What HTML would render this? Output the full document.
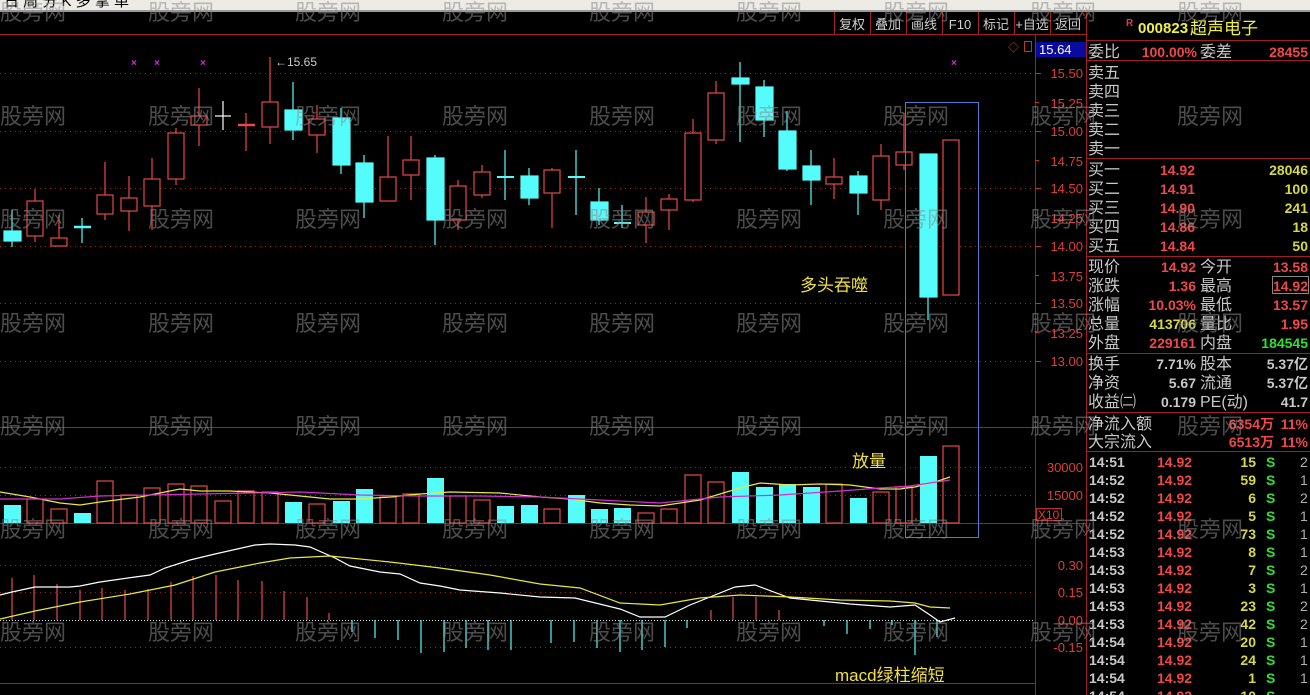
<!DOCTYPE html>
<html><head><meta charset="utf-8"><style>
html,body{margin:0;padding:0;background:#000;width:1310px;height:695px;overflow:hidden}
svg{display:block}
text{font-family:"Liberation Sans","Noto Sans CJK SC",sans-serif}
.cn{font-family:"Liberation Sans","WenQuanYi Zen Hei","Noto Sans CJK SC",sans-serif}
</style></head><body>
<svg width="1310" height="695" xmlns="http://www.w3.org/2000/svg">
<rect width="1310" height="695" fill="#000"/>
<rect x="0" y="0" width="1310" height="10" fill="#ecebe6"/>
<rect x="0" y="10" width="1310" height="2" fill="#9a9a9a"/>
<text x="4" y="6" font-size="15" fill="#000" class="cn">日 周 分 K 多 掌 单</text>
<g stroke="#a02020" stroke-width="1">
<line x1="0" y1="34.5" x2="1086" y2="34.5"/>
<line x1="834.5" y1="12" x2="834.5" y2="34"/><line x1="870.5" y1="12" x2="870.5" y2="34"/><line x1="906.5" y1="12" x2="906.5" y2="34"/><line x1="942.5" y1="12" x2="942.5" y2="34"/><line x1="978.5" y1="12" x2="978.5" y2="34"/><line x1="1014.5" y1="12" x2="1014.5" y2="34"/><line x1="1050.5" y1="12" x2="1050.5" y2="34"/>
<line x1="1086.5" y1="12" x2="1086.5" y2="695"/>
<line x1="1035.5" y1="34" x2="1035.5" y2="695"/>
<line x1="0" y1="427.5" x2="1086" y2="427.5"/>
<line x1="0" y1="523.5" x2="1086" y2="523.5"/>
<line x1="0" y1="683.5" x2="1035" y2="683.5"/>
</g>
<g font-size="13" fill="#d0d0d0" class="cn" text-anchor="middle">
<text x="852" y="29">复权</text><text x="888" y="29">叠加</text><text x="924" y="29">画线</text><text x="960" y="29">F10</text><text x="996" y="29">标记</text><text x="1032" y="29">+自选</text><text x="1068" y="29">返回</text>
</g>
<g stroke="#a02020" stroke-width="1" stroke-dasharray="1,4">
<line x1="0" y1="73.5" x2="1035" y2="73.5"/><line x1="0" y1="131.5" x2="1035" y2="131.5"/><line x1="0" y1="188.5" x2="1035" y2="188.5"/><line x1="0" y1="246.5" x2="1035" y2="246.5"/><line x1="0" y1="303.5" x2="1035" y2="303.5"/><line x1="0" y1="361.5" x2="1035" y2="361.5"/>
<line x1="0" y1="467.5" x2="1035" y2="467.5"/><line x1="0" y1="495.5" x2="1035" y2="495.5"/>
<line x1="0" y1="565.5" x2="1035" y2="565.5"/><line x1="0" y1="592.5" x2="1035" y2="592.5"/><line x1="0" y1="647.5" x2="1035" y2="647.5"/>
</g>
<line x1="0" y1="620.5" x2="1035" y2="620.5" stroke="#ddd" stroke-dasharray="1,2"/>
<g font-size="13" fill="#e03c3c" text-anchor="end">
<text x="1083" y="78">15.50</text><text x="1083" y="108">15.25</text><text x="1083" y="136">15.00</text><text x="1083" y="166">14.75</text><text x="1083" y="193">14.50</text><text x="1083" y="223">14.25</text><text x="1083" y="251">14.00</text><text x="1083" y="281">13.75</text><text x="1083" y="308">13.50</text><text x="1083" y="338">13.25</text><text x="1083" y="366">13.00</text>
<text x="1083" y="472">30000</text><text x="1083" y="500">15000</text>
<text x="1083" y="570">0.30</text><text x="1083" y="597">0.15</text><text x="1083" y="625">0.00</text><text x="1083" y="652">-0.15</text>
</g>
<g stroke="#c03030"><line x1="1035" y1="73.5" x2="1041" y2="73.5"/><line x1="1035" y1="131.5" x2="1041" y2="131.5"/><line x1="1035" y1="188.5" x2="1041" y2="188.5"/><line x1="1035" y1="246.5" x2="1041" y2="246.5"/><line x1="1035" y1="303.5" x2="1041" y2="303.5"/><line x1="1035" y1="361.5" x2="1041" y2="361.5"/><line x1="1035" y1="102.5" x2="1039" y2="102.5"/><line x1="1035" y1="160.5" x2="1039" y2="160.5"/><line x1="1035" y1="217.5" x2="1039" y2="217.5"/><line x1="1035" y1="275.5" x2="1039" y2="275.5"/><line x1="1035" y1="332.5" x2="1039" y2="332.5"/></g>
<rect x="1036.5" y="508.5" width="25" height="12" fill="none" stroke="#c03030"/>
<text x="1038" y="519" font-size="12" fill="#e03c3c">X10</text>
<rect x="1036" y="42" width="50" height="15" fill="#0a0aa0"/>
<text x="1039" y="54" font-size="13" fill="#fff">15.64</text>
<text x="1008" y="51" font-size="11" fill="#e03c3c">◇</text>
<rect x="1024.5" y="41.5" width="7" height="10" fill="none" stroke="#c03030"/>
<g font-size="10" fill="#e020e0" font-weight="bold"><text x="131" y="66">×</text><text x="154" y="66">×</text><text x="200" y="66">×</text><text x="951" y="66">×</text></g>
<text x="275" y="66" font-size="12" fill="#ccc">←15.65</text>
<g stroke="#e84848" stroke-width="1.2" fill="#000">
<line x1="35" y1="189" x2="35" y2="242"/><rect x="27" y="201" width="16" height="35"/>
<line x1="59" y1="215" x2="59" y2="246"/><rect x="51" y="238" width="16" height="8"/>
<line x1="105" y1="162" x2="105" y2="220"/><rect x="97" y="195" width="16" height="19"/>
<line x1="129" y1="176" x2="129" y2="231"/><rect x="121" y="198" width="16" height="13"/>
<line x1="152" y1="158" x2="152" y2="230"/><rect x="144" y="179" width="16" height="27"/>
<line x1="176" y1="128" x2="176" y2="185"/><rect x="168" y="133" width="16" height="46"/>
<line x1="199" y1="88" x2="199" y2="146"/><rect x="191" y="116" width="16" height="9"/>
<line x1="246" y1="113" x2="246" y2="151"/><line x1="238" y1="125" x2="255" y2="125" stroke-width="2.5"/>
<line x1="270" y1="57" x2="270" y2="144"/><rect x="262" y="102" width="16" height="25"/>
<line x1="317" y1="105" x2="317" y2="153"/><rect x="309" y="119" width="16" height="16"/>
<line x1="388" y1="136" x2="388" y2="200"/><rect x="380" y="177" width="16" height="24"/>
<line x1="411" y1="136" x2="411" y2="200"/><rect x="403" y="160" width="16" height="15"/>
<line x1="458" y1="180" x2="458" y2="230"/><rect x="450" y="186" width="16" height="34"/>
<line x1="482" y1="165" x2="482" y2="198"/><rect x="474" y="172" width="16" height="23"/>
<line x1="552" y1="168" x2="552" y2="228"/><rect x="544" y="170" width="16" height="23"/>
<line x1="646" y1="197" x2="646" y2="243"/><rect x="638" y="212" width="16" height="13"/>
<line x1="669" y1="194" x2="669" y2="230"/><rect x="661" y="199" width="16" height="11"/>
<line x1="693" y1="119" x2="693" y2="202"/><rect x="685" y="133" width="16" height="67"/>
<line x1="716" y1="81" x2="716" y2="144"/><rect x="708" y="93" width="16" height="47"/>
<line x1="834" y1="158" x2="834" y2="199"/><rect x="826" y="177" width="16" height="7"/>
<line x1="881" y1="144" x2="881" y2="210"/><rect x="873" y="156" width="16" height="44"/>
<line x1="904" y1="113" x2="904" y2="170"/><rect x="896" y="152" width="16" height="13"/>
<rect x="943" y="140" width="16" height="155"/>
</g>
<g stroke="#54fcfc" stroke-width="1.2" fill="#54fcfc">
<line x1="12" y1="210" x2="12" y2="247"/><rect x="4" y="231" width="17" height="10"/>
<line x1="82" y1="218" x2="82" y2="243"/><line x1="74" y1="227" x2="91" y2="227" stroke-width="2.5"/>
<line x1="293" y1="82" x2="293" y2="140"/><rect x="285" y="110" width="17" height="20"/>
<line x1="341" y1="108" x2="341" y2="174"/><rect x="333" y="118" width="17" height="47"/>
<line x1="364" y1="155" x2="364" y2="218"/><rect x="356" y="163" width="17" height="39"/>
<line x1="435" y1="155" x2="435" y2="245"/><rect x="427" y="158" width="17" height="62"/>
<line x1="505" y1="150" x2="505" y2="200"/><line x1="497" y1="177" x2="514" y2="177" stroke-width="2"/>
<line x1="529" y1="168" x2="529" y2="205"/><rect x="521" y="176" width="17" height="22"/>
<line x1="576" y1="150" x2="576" y2="215"/><line x1="568" y1="177" x2="585" y2="177" stroke-width="2"/>
<line x1="599" y1="188" x2="599" y2="225"/><rect x="591" y="202" width="17" height="18"/>
<line x1="622" y1="205" x2="622" y2="228"/><line x1="614" y1="223" x2="631" y2="223" stroke-width="2"/>
<line x1="740" y1="62" x2="740" y2="142"/><rect x="732" y="78" width="17" height="6"/>
<line x1="764" y1="80" x2="764" y2="137"/><rect x="756" y="87" width="17" height="33"/>
<line x1="787" y1="111" x2="787" y2="171"/><rect x="779" y="131" width="17" height="38"/>
<line x1="811" y1="150" x2="811" y2="205"/><rect x="803" y="166" width="17" height="14"/>
<line x1="858" y1="171" x2="858" y2="215"/><rect x="850" y="176" width="17" height="17"/>
<line x1="928" y1="154" x2="928" y2="320"/><rect x="920" y="154" width="17" height="143"/>
</g>
<g stroke="#fff" stroke-width="1.2"><line x1="223" y1="101" x2="223" y2="130"/><line x1="215" y1="116" x2="231" y2="116"/></g>
<g stroke="#e84848" stroke-width="1.2" fill="none">
<rect x="27" y="499" width="16" height="24"/><rect x="51" y="509" width="16" height="14"/><rect x="97" y="481" width="16" height="42"/><rect x="121" y="495" width="16" height="28"/><rect x="144" y="488" width="16" height="35"/><rect x="168" y="484" width="16" height="39"/><rect x="191" y="486" width="16" height="37"/><rect x="215" y="501" width="16" height="22"/><rect x="238" y="491" width="16" height="32"/><rect x="262" y="492" width="16" height="31"/><rect x="309" y="504" width="16" height="19"/><rect x="380" y="497" width="16" height="26"/><rect x="403" y="494" width="16" height="29"/><rect x="450" y="496" width="16" height="27"/><rect x="474" y="500" width="16" height="23"/><rect x="544" y="509" width="16" height="14"/><rect x="638" y="513" width="16" height="10"/><rect x="661" y="509" width="16" height="14"/><rect x="685" y="475" width="16" height="48"/><rect x="708" y="482" width="16" height="41"/><rect x="826" y="484" width="16" height="39"/><rect x="873" y="492" width="16" height="31"/><rect x="896" y="487" width="16" height="36"/><rect x="943" y="446" width="16" height="77"/>
</g>
<g fill="#54fcfc">
<rect x="4" y="505" width="17" height="18"/><rect x="74" y="513" width="17" height="10"/><rect x="285" y="502" width="17" height="21"/><rect x="333" y="501" width="17" height="22"/><rect x="356" y="489" width="17" height="34"/><rect x="427" y="478" width="17" height="45"/><rect x="497" y="506" width="17" height="17"/><rect x="521" y="505" width="17" height="18"/><rect x="568" y="495" width="17" height="28"/><rect x="591" y="509" width="17" height="14"/><rect x="614" y="508" width="17" height="15"/><rect x="732" y="472" width="17" height="51"/><rect x="756" y="487" width="17" height="36"/><rect x="779" y="484" width="17" height="39"/><rect x="803" y="487" width="17" height="36"/><rect x="850" y="498" width="17" height="25"/><rect x="920" y="456" width="17" height="67"/>
</g>
<polyline fill="none" stroke="#e8e840" stroke-width="1.2" points="0,492 30,497 60,503 80,505 100,502 140,497 180,489 200,491 230,491 270,493 300,496 330,499 360,499 390,497 420,494 450,492 500,493 540,497 570,499 600,503 630,505 660,506 700,500 740,488 760,483 790,485 820,484 850,485 880,489 900,489 915,487 935,482 950,477"/>
<polyline fill="none" stroke="#d030d0" stroke-width="1.2" points="0,499 60,499 100,496 200,494 300,492 360,495 420,496 480,496 540,497 600,500 660,503 720,497 780,495 840,491 880,488 910,486 950,480"/>
<g stroke="#e84848" stroke-width="1.2">
<line x1="12" y1="578" x2="12" y2="620"/><line x1="34" y1="575" x2="34" y2="620"/><line x1="57" y1="584" x2="57" y2="620"/><line x1="80" y1="590" x2="80" y2="620"/><line x1="102" y1="588" x2="102" y2="620"/><line x1="125" y1="590" x2="125" y2="620"/><line x1="148" y1="589" x2="148" y2="620"/><line x1="171" y1="582" x2="171" y2="620"/><line x1="193" y1="576" x2="193" y2="620"/><line x1="216" y1="575" x2="216" y2="620"/><line x1="238" y1="580" x2="238" y2="620"/><line x1="262" y1="581" x2="262" y2="620"/><line x1="284" y1="591" x2="284" y2="620"/><line x1="307" y1="597" x2="307" y2="620"/><line x1="329" y1="613" x2="329" y2="620"/>
<line x1="711" y1="610" x2="711" y2="620"/><line x1="733" y1="597" x2="733" y2="620"/><line x1="756" y1="597" x2="756" y2="620"/><line x1="779" y1="610" x2="779" y2="620"/>
</g>
<g stroke="#54fcfc" stroke-width="1.2">
<line x1="352" y1="620" x2="352" y2="632"/><line x1="375" y1="620" x2="375" y2="638"/><line x1="398" y1="620" x2="398" y2="640"/><line x1="421" y1="620" x2="421" y2="653"/><line x1="444" y1="620" x2="444" y2="652"/><line x1="466" y1="620" x2="466" y2="648"/><line x1="488" y1="620" x2="488" y2="650"/><line x1="511" y1="620" x2="511" y2="650"/><line x1="551" y1="620" x2="551" y2="643"/><line x1="574" y1="620" x2="574" y2="642"/><line x1="597" y1="620" x2="597" y2="648"/><line x1="620" y1="620" x2="620" y2="652"/><line x1="642" y1="620" x2="642" y2="650"/><line x1="665" y1="620" x2="665" y2="647"/><line x1="687" y1="620" x2="687" y2="628"/>
<line x1="824" y1="620" x2="824" y2="626"/><line x1="847" y1="620" x2="847" y2="634"/><line x1="870" y1="620" x2="870" y2="629"/><line x1="892" y1="620" x2="892" y2="625"/><line x1="915" y1="620" x2="915" y2="655"/><line x1="937" y1="620" x2="937" y2="637"/>
</g>
<polyline fill="none" stroke="#fff" stroke-width="1.2" points="0,595 12,592 35,587 70,587 80,586 100,582 135,577 150,575 165,568 190,560 215,554 255,545 270,544 295,545 310,547 335,558 350,566 380,572 400,574 420,583 440,586 460,590 500,593 540,597 575,598 620,609 640,617 665,617 690,605 735,587 755,585 790,598 850,604 890,607 915,605 930,615 940,622 955,618"/>
<polyline fill="none" stroke="#e8e840" stroke-width="1.2" points="0,619 35,611 80,602 130,594 175,585 215,572 260,563 290,558 330,556 350,558 390,562 440,568 490,575 540,584 580,588 620,603 660,605 700,598 740,595 790,597 840,600 890,601 915,603 930,607 950,608"/>
<rect x="905.5" y="102.5" width="73" height="435" fill="none" stroke="#4a7ed0" stroke-width="1"/>
<g fill="#f0e040" class="cn" font-size="17"><text x="800" y="291">多头吞噬</text><text x="852" y="467">放量</text><text x="835" y="681">macd绿柱缩短</text></g>
<g stroke="#a02020"><line x1="1086" y1="40.5" x2="1310" y2="40.5"/><line x1="1086" y1="60.5" x2="1310" y2="60.5"/><line x1="1086" y1="158.5" x2="1310" y2="158.5"/><line x1="1086" y1="256.5" x2="1310" y2="256.5"/><line x1="1086" y1="353.5" x2="1310" y2="353.5"/><line x1="1086" y1="412.5" x2="1310" y2="412.5"/><line x1="1086" y1="451.5" x2="1310" y2="451.5"/></g>
<text x="1126" y="26" font-size="10" fill="#e03c3c" font-weight="bold">R</text>
<text x="1138" y="33" font-size="15" fill="#f0f040" font-weight="bold">000823</text>
<text x="1190" y="34" font-size="17" fill="#f0f040" class="cn">超声电子</text>
<g font-size="16" fill="#c8c8c8" class="cn">
<text x="1088" y="57">委比</text><text x="1200" y="57">委差</text>
<text x="1088" y="78">卖五</text><text x="1088" y="97">卖四</text><text x="1088" y="116">卖三</text><text x="1088" y="135">卖二</text><text x="1088" y="154">卖一</text>
<text x="1088" y="175">买一</text><text x="1088" y="194">买二</text><text x="1088" y="213">买三</text><text x="1088" y="232">买四</text><text x="1088" y="251">买五</text>
<text x="1088" y="272">现价</text><text x="1200" y="272">今开</text><text x="1088" y="291">涨跌</text><text x="1200" y="291">最高</text><text x="1088" y="310">涨幅</text><text x="1200" y="310">最低</text><text x="1088" y="329">总量</text><text x="1200" y="329">量比</text><text x="1088" y="348">外盘</text><text x="1200" y="348">内盘</text>
<text x="1088" y="369">换手</text><text x="1200" y="369">股本</text><text x="1088" y="388">净资</text><text x="1200" y="388">流通</text><text x="1088" y="407">收益㈡</text><text x="1200" y="407">PE(动)</text>
<text x="1088" y="429">净流入额</text><text x="1088" y="447">大宗流入</text>
</g>
<g font-size="14" font-weight="bold" text-anchor="end">
<text x="1197" y="57" fill="#f04848">100.00%</text><text x="1308" y="57" fill="#f04848">28455</text>
<text x="1195" y="175" fill="#f04848">14.92</text><text x="1308" y="175" fill="#d8d840">28046</text>
<text x="1195" y="194" fill="#f04848">14.91</text><text x="1308" y="194" fill="#d8d840">100</text>
<text x="1195" y="213" fill="#f04848">14.90</text><text x="1308" y="213" fill="#d8d840">241</text>
<text x="1195" y="232" fill="#f04848">14.86</text><text x="1308" y="232" fill="#d8d840">18</text>
<text x="1195" y="251" fill="#f04848">14.84</text><text x="1308" y="251" fill="#d8d840">50</text>
<text x="1196" y="272" fill="#f04848">14.92</text><text x="1308" y="272" fill="#f04848">13.58</text>
<text x="1196" y="291" fill="#f04848">1.36</text><text x="1308" y="291" fill="#f04848">14.92</text>
<text x="1196" y="310" fill="#f04848">10.03%</text><text x="1308" y="310" fill="#f04848">13.57</text>
<text x="1196" y="329" fill="#d8d840">413706</text><text x="1308" y="329" fill="#f04848">1.95</text>
<text x="1196" y="348" fill="#f04848">229161</text><text x="1308" y="348" fill="#30e030">184545</text>
<text x="1196" y="369" fill="#c8c8c8">7.71%</text><text x="1308" y="369" fill="#c8c8c8">5.37亿</text>
<text x="1196" y="388" fill="#c8c8c8">5.67</text><text x="1308" y="388" fill="#c8c8c8">5.37亿</text>
<text x="1196" y="407" fill="#c8c8c8">0.179</text><text x="1308" y="407" fill="#c8c8c8">41.7</text>
<text x="1274" y="429" fill="#f04848">6354万</text><text x="1308" y="429" fill="#f04848">11%</text>
<text x="1274" y="447" fill="#f04848">6513万</text><text x="1308" y="447" fill="#f04848">11%</text>
</g>
<rect x="1272.5" y="276.5" width="36" height="17" fill="none" stroke="#888"/>
<g font-size="14" font-weight="bold">
<g fill="#c8c8c8"><text x="1089" y="467">14:51</text><text x="1089" y="485">14:52</text><text x="1089" y="503">14:52</text><text x="1089" y="521">14:52</text><text x="1089" y="539">14:52</text><text x="1089" y="557">14:53</text><text x="1089" y="575">14:53</text><text x="1089" y="593">14:53</text><text x="1089" y="611">14:53</text><text x="1089" y="629">14:53</text><text x="1089" y="647">14:54</text><text x="1089" y="665">14:54</text><text x="1089" y="683">14:54</text><text x="1089" y="701">14:54</text></g>
<g fill="#f04848"><text x="1157" y="467">14.92</text><text x="1157" y="485">14.92</text><text x="1157" y="503">14.92</text><text x="1157" y="521">14.92</text><text x="1157" y="539">14.92</text><text x="1157" y="557">14.92</text><text x="1157" y="575">14.92</text><text x="1157" y="593">14.92</text><text x="1157" y="611">14.92</text><text x="1157" y="629">14.92</text><text x="1157" y="647">14.92</text><text x="1157" y="665">14.92</text><text x="1157" y="683">14.92</text><text x="1157" y="701">14.92</text></g>
<g fill="#d8d840" text-anchor="end"><text x="1256" y="467">15</text><text x="1256" y="485">59</text><text x="1256" y="503">6</text><text x="1256" y="521">5</text><text x="1256" y="539">73</text><text x="1256" y="557">8</text><text x="1256" y="575">7</text><text x="1256" y="593">3</text><text x="1256" y="611">23</text><text x="1256" y="629">42</text><text x="1256" y="647">20</text><text x="1256" y="665">24</text><text x="1256" y="683">1</text><text x="1256" y="701">10</text></g>
<g fill="#30e030"><text x="1266" y="467">S</text><text x="1266" y="485">S</text><text x="1266" y="503">S</text><text x="1266" y="521">S</text><text x="1266" y="539">S</text><text x="1266" y="557">S</text><text x="1266" y="575">S</text><text x="1266" y="593">S</text><text x="1266" y="611">S</text><text x="1266" y="629">S</text><text x="1266" y="647">S</text><text x="1266" y="665">S</text><text x="1266" y="683">S</text><text x="1266" y="701">S</text></g>
<g fill="#b0b0b0" font-weight="normal"><text x="1300" y="467">2</text><text x="1300" y="485">1</text><text x="1300" y="503">2</text><text x="1300" y="521">1</text><text x="1300" y="539">1</text><text x="1300" y="557">1</text><text x="1300" y="575">2</text><text x="1300" y="593">1</text><text x="1300" y="611">2</text><text x="1300" y="629">2</text><text x="1300" y="647">1</text><text x="1300" y="665">1</text><text x="1300" y="683">1</text></g>
</g>
<g font-size="22" fill="#8a8a8a" fill-opacity="0.55" class="cn">
<text x="0" y="20">股旁网</text><text x="148" y="20">股旁网</text><text x="295" y="20">股旁网</text><text x="442" y="20">股旁网</text><text x="589" y="20">股旁网</text><text x="736" y="20">股旁网</text><text x="883" y="20">股旁网</text><text x="1030" y="20">股旁网</text><text x="1177" y="20">股旁网</text>
<text x="0" y="124">股旁网</text><text x="148" y="124">股旁网</text><text x="295" y="124">股旁网</text><text x="442" y="124">股旁网</text><text x="589" y="124">股旁网</text><text x="736" y="124">股旁网</text><text x="883" y="124">股旁网</text><text x="1030" y="124">股旁网</text><text x="1177" y="124">股旁网</text>
<text x="0" y="227">股旁网</text><text x="148" y="227">股旁网</text><text x="295" y="227">股旁网</text><text x="442" y="227">股旁网</text><text x="589" y="227">股旁网</text><text x="736" y="227">股旁网</text><text x="883" y="227">股旁网</text><text x="1030" y="227">股旁网</text><text x="1177" y="227">股旁网</text>
<text x="0" y="331">股旁网</text><text x="148" y="331">股旁网</text><text x="295" y="331">股旁网</text><text x="442" y="331">股旁网</text><text x="589" y="331">股旁网</text><text x="736" y="331">股旁网</text><text x="883" y="331">股旁网</text><text x="1030" y="331">股旁网</text><text x="1177" y="331">股旁网</text>
<text x="0" y="434">股旁网</text><text x="148" y="434">股旁网</text><text x="295" y="434">股旁网</text><text x="442" y="434">股旁网</text><text x="589" y="434">股旁网</text><text x="736" y="434">股旁网</text><text x="883" y="434">股旁网</text><text x="1030" y="434">股旁网</text><text x="1177" y="434">股旁网</text>
<text x="0" y="537">股旁网</text><text x="148" y="537">股旁网</text><text x="295" y="537">股旁网</text><text x="442" y="537">股旁网</text><text x="589" y="537">股旁网</text><text x="736" y="537">股旁网</text><text x="883" y="537">股旁网</text><text x="1030" y="537">股旁网</text><text x="1177" y="537">股旁网</text>
<text x="0" y="640">股旁网</text><text x="148" y="640">股旁网</text><text x="295" y="640">股旁网</text><text x="442" y="640">股旁网</text><text x="589" y="640">股旁网</text><text x="736" y="640">股旁网</text><text x="883" y="640">股旁网</text><text x="1030" y="640">股旁网</text><text x="1177" y="640">股旁网</text>
</g>
</svg>
</body></html>
